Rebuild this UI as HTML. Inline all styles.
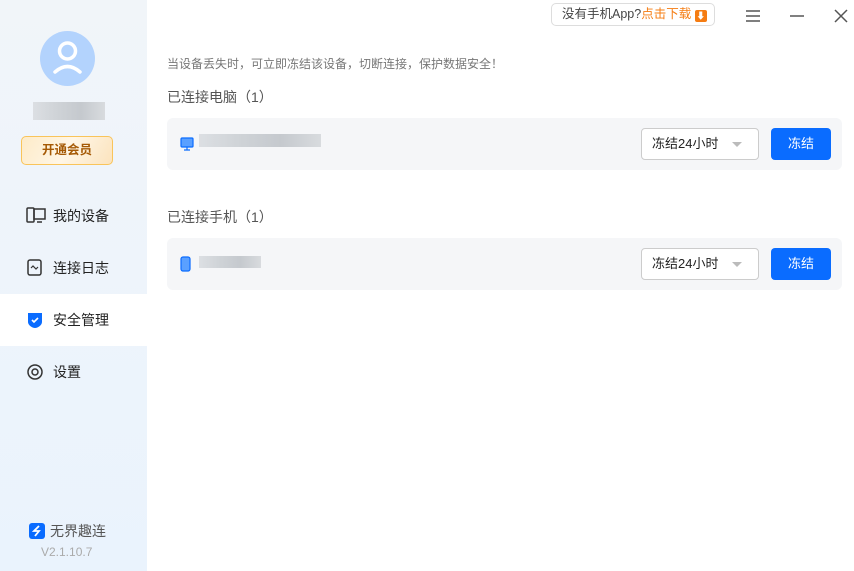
<!DOCTYPE html>
<html><head><meta charset="utf-8"><style>
*{margin:0;padding:0;box-sizing:border-box}
body{width:854px;height:571px;overflow:hidden;font-family:"Liberation Sans","Noto Sans CJK SC",sans-serif;background:#fff;position:relative;color:#222}
.side{position:absolute;left:0;top:0;width:147px;height:571px;background:linear-gradient(#f1f5f9,#eaf3fd)}
.av{position:absolute;left:40px;top:31px;width:55px;height:55px;border-radius:50%;background:#b3d3fd}
.blur{position:absolute;background:linear-gradient(90deg,#dcdfe3,#cfd3d7,#c5c9ce,#d8dbde);}
.vip{position:absolute;left:21px;top:136px;width:92px;height:29px;border:1.5px solid #f9c45a;border-radius:5px;background:linear-gradient(120deg,#fdebc8,#fff6e6,#fbe3bd);color:#a55a06;font-size:12.5px;font-weight:bold;text-align:center;line-height:26px}
.nav{position:absolute;left:0;width:147px;height:52px;font-size:14px;line-height:52px;padding-left:53px}
.nav svg{position:absolute;left:26px;top:17px}
.nav.act{background:#fff}
.brand{position:absolute;left:29px;top:521px;font-size:14px;color:#555;display:flex;align-items:center;gap:5px}
.ver{position:absolute;left:41px;top:545px;font-size:12px;color:#aaa}
.dl{position:absolute;left:551px;top:3px;width:164px;height:23px;border:1px solid #ddd;border-radius:5px;font-size:12.5px;color:#444;line-height:21px;padding-left:10px;white-space:nowrap}
.dl b{color:#f57c12;font-weight:normal}
.tip{position:absolute;left:167px;top:55px;font-size:12px;color:#777}
.h{position:absolute;left:167px;font-size:14px;color:#555}
.card{position:absolute;left:167px;width:675px;height:52px;background:#f5f6f8;border-radius:6px}
.sel{position:absolute;left:474px;top:10px;width:118px;height:32px;border:1px solid #ccc;border-radius:4px;background:#fff;font-size:13px;line-height:30px;padding-left:10px}
.sel:after{content:"";position:absolute;right:16px;top:13px;border:5px solid transparent;border-top-color:#bbb}
.btn{position:absolute;left:604px;top:10px;width:60px;height:32px;background:#0a6cff;border-radius:4px;color:#fff;font-size:13px;text-align:center;line-height:32px}
</style></head><body>
<div class="side">
 <div class="av"><svg width="55" height="55"><circle cx="27.5" cy="20" r="8" fill="none" stroke="#fff" stroke-width="3.5"/><path d="M15 41 Q27.5 30 40 41" fill="none" stroke="#fff" stroke-width="3.5" stroke-linecap="round"/></svg></div>
 <div class="blur" style="left:33px;top:102px;width:72px;height:18px"></div>
 <div class="vip">开通会员</div>
 <div class="nav" style="top:190px"><svg width="20" height="18"><rect x="1" y="1" width="7" height="14" rx="1" fill="none" stroke="#333" stroke-width="1.5"/><rect x="8" y="2" width="11" height="10" fill="none" stroke="#333" stroke-width="1.5"/><path d="M11 15h5" stroke="#333" stroke-width="1.5"/></svg>我的设备</div>
 <div class="nav" style="top:242px"><svg width="18" height="18"><rect x="2" y="1" width="13" height="15" rx="2" fill="none" stroke="#333" stroke-width="1.5"/><path d="M5 9l2-2 3 3 2-2" fill="none" stroke="#333" stroke-width="1.2"/></svg>连接日志</div>
 <div class="nav act" style="top:294px"><svg width="18" height="18"><path d="M2 2h14v9c0 3-4 6-7 6S2 14 2 11z" fill="#0a6cff"/><path d="M6 9l2 2 4-4" fill="none" stroke="#fff" stroke-width="1.6"/></svg>安全管理</div>
 <div class="nav" style="top:346px"><svg width="18" height="18"><circle cx="9" cy="9" r="7" fill="none" stroke="#333" stroke-width="1.5"/><circle cx="9" cy="9" r="3" fill="none" stroke="#333" stroke-width="1.5"/></svg>设置</div>
 <div class="brand"><svg width="16" height="16"><rect width="16" height="16" rx="3" fill="#0a6cff"/><path d="M10 3 5 8h5l-4 5" fill="none" stroke="#fff" stroke-width="1.8"/></svg>无界趣连</div>
 <div class="ver">V2.1.10.7</div>
</div>
<div class="dl">没有手机App?<b>点击下载</b> <span style="display:inline-block;width:12px;height:12px;background:#f57c12;border-radius:2px;color:#fff;font-size:9px;line-height:12px;text-align:center;vertical-align:-1px">⬇</span></div>
<svg style="position:absolute;left:745px;top:9px" width="16" height="14"><path d="M1 2h14M1 7h14M1 12h14" stroke="#555" stroke-width="1.5"/></svg>
<svg style="position:absolute;left:789px;top:9px" width="16" height="14"><path d="M1 7h14" stroke="#555" stroke-width="1.5"/></svg>
<svg style="position:absolute;left:833px;top:8px" width="16" height="16"><path d="M2 2l12 12M14 2 2 14" stroke="#555" stroke-width="1.5"/></svg>
<div class="tip">当设备丢失时，可立即冻结该设备，切断连接，保护数据安全！</div>
<div class="h" style="top:87px">已连接电脑（1）</div>
<div class="card" style="top:118px">
 <svg style="position:absolute;left:13px;top:19px" width="14" height="14"><rect x="1" y="1" width="12" height="9" rx="1" fill="#5aa0ff" stroke="#0a6cff" stroke-width="1.2"/><path d="M4 13h6M7 10v3" stroke="#0a6cff" stroke-width="1.2"/></svg>
 <div class="blur" style="left:32px;top:16px;width:122px;height:13px"></div>
 <div class="sel">冻结24小时</div><div class="btn">冻结</div>
</div>
<div class="h" style="top:207px">已连接手机（1）</div>
<div class="card" style="top:238px">
 <svg style="position:absolute;left:13px;top:18px" width="12" height="16"><rect x="1" y="1" width="9" height="14" rx="2" fill="#5aa0ff" stroke="#0a6cff" stroke-width="1.2"/></svg>
 <div class="blur" style="left:32px;top:18px;width:62px;height:12px"></div>
 <div class="sel">冻结24小时</div><div class="btn">冻结</div>
</div>
</body></html>
